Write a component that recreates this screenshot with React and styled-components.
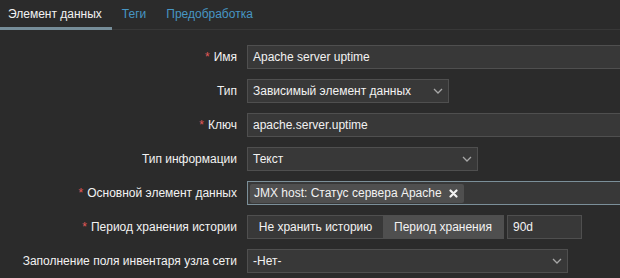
import React from 'react';
import styled, { createGlobalStyle } from 'styled-components';

const GlobalStyle = createGlobalStyle`
  html, body {
    margin: 0;
    padding: 0;
    background: #2b2b2b;
    overflow: hidden;
  }
  body {
    font-family: "Liberation Sans", Arial, sans-serif;
    font-size: 12px;
    color: #f2f2f2;
  }
`;

const Page = styled.div`
  width: 620px;
  height: 278px;
  background: #2b2b2b;
  overflow: hidden;
`;

const TabBar = styled.div`
  display: flex;
  border-bottom: 1px solid #383838;
`;

const Tab = styled.div`
  height: 30px;
  margin-bottom: -1px;
  box-sizing: border-box;
  padding: 0 10px 0 ${(p) => (p.$first ? '8px' : '10px')};
  display: flex;
  align-items: center;
  border-bottom: 3px solid ${(p) => (p.$active ? '#768d99' : 'transparent')};
  color: ${(p) => (p.$active ? '#f2f2f2' : '#4796c4')};
  white-space: nowrap;
`;

const Form = styled.div`
  display: grid;
  grid-template-columns: 237px 1fr;
  column-gap: 10px;
  row-gap: 10px;
  padding-top: 15px;
`;

const Label = styled.div`
  height: 24px;
  display: flex;
  align-items: center;
  justify-content: flex-end;
  white-space: nowrap;
  min-width: 0;
`;

const Asterisk = styled.span`
  color: #e45959;
  margin-right: 4px;
`;

const Field = styled.div`
  display: flex;
  gap: 3px;
  min-width: 0;
`;

const Box = styled.div`
  box-sizing: border-box;
  flex: none;
  width: ${(p) => p.$w}px;
  height: 24px;
  background: #383838;
  border: 1px solid ${(p) => (p.$focus ? '#7b8f99' : '#4f4f4f')};
  display: flex;
  align-items: center;
  padding: ${(p) => (p.$tight ? '0 2px' : '0 5px')};
  white-space: nowrap;
`;

const Text = styled.span`
  flex: 1;
`;

const Chevron = () => (
  <svg width="10" height="6" viewBox="0 0 10 6" style={{ marginRight: 0 }}>
    <polyline points="1,1 5,5 9,1" fill="none" stroke="#a7a7a7" strokeWidth="1.3" />
  </svg>
);

const Chip = styled.div`
  height: 19px;
  background: #4f4f4f;
  border-radius: 2px;
  display: flex;
  align-items: center;
  gap: 7px;
  padding: 0 6px 0 4px;
`;

const Cross = () => (
  <svg width="9" height="9" viewBox="0 0 9 9">
    <path d="M1.5 1.5 L7.5 7.5 M7.5 1.5 L1.5 7.5" stroke="#f2f2f2" strokeWidth="2.2" strokeLinecap="round" />
  </svg>
);

const Toggle = styled.div`
  box-sizing: border-box;
  width: 257px;
  height: 24px;
  display: flex;
  background: #383838;
  border: 1px solid #4f4f4f;
`;

const Segment = styled.div`
  width: ${(p) => p.$w}px;
  display: flex;
  align-items: center;
  justify-content: center;
  background: ${(p) => (p.$active ? '#4f4f4f' : 'transparent')};
  white-space: nowrap;
`;

const Row = ({ label, required, children }) => (
  <>
    <Label>
      {required && <Asterisk>*</Asterisk>}
      {label}
    </Label>
    <Field>{children}</Field>
  </>
);

export default function App() {
  return (
    <Page>
      <GlobalStyle />
      <TabBar>
        <Tab $active $first>Элемент данных</Tab>
        <Tab>Теги</Tab>
        <Tab>Предобработка</Tab>
      </TabBar>
      <Form>
        <Row label="Имя" required>
          <Box $w={453}>Apache server uptime</Box>
        </Row>
        <Row label="Тип">
          <Box $w={202}>
            <Text>Зависимый элемент данных</Text>
            <Chevron />
          </Box>
        </Row>
        <Row label="Ключ" required>
          <Box $w={453}>apache.server.uptime</Box>
        </Row>
        <Row label="Тип информации">
          <Box $w={231}>
            <Text>Текст</Text>
            <Chevron />
          </Box>
        </Row>
        <Row label="Основной элемент данных" required>
          <Box $w={453} $focus $tight>
            <Chip>
              <span>JMX host: Статус сервера Apache</span>
              <Cross />
            </Chip>
          </Box>
        </Row>
        <Row label="Период хранения истории" required>
          <Toggle>
            <Segment $w={135}>Не хранить историю</Segment>
            <Segment $w={120} $active>Период хранения</Segment>
          </Toggle>
          <Box $w={75}>90d</Box>
        </Row>
        <Row label="Заполнение поля инвентаря узла сети">
          <Box $w={321}>
            <Text>-Нет-</Text>
            <Chevron />
          </Box>
        </Row>
      </Form>
    </Page>
  );
}
